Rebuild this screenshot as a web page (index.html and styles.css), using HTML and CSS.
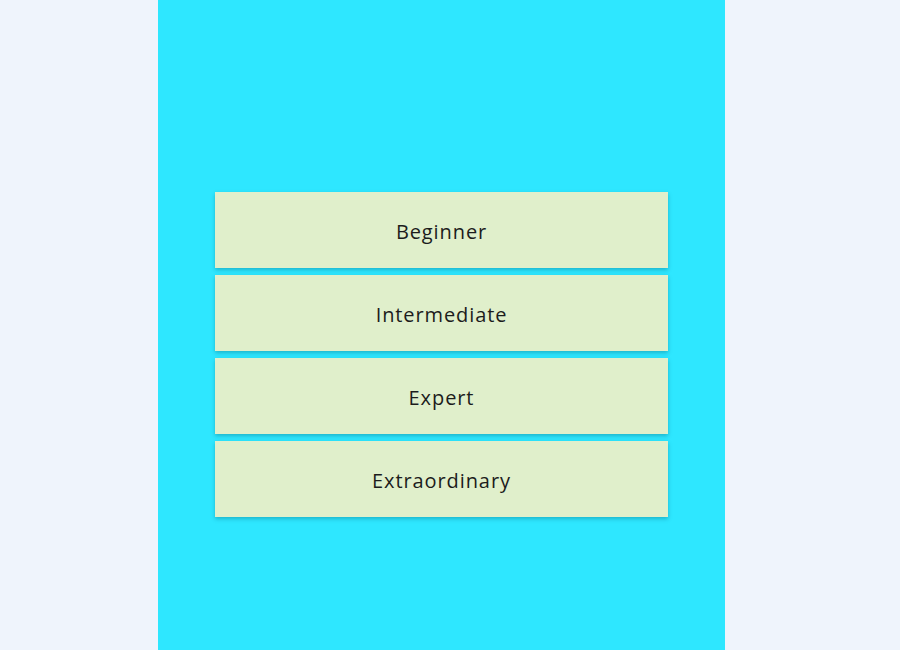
FILE: index.html
```html
<!DOCTYPE html>
<html>
<head>
    <title>Choose Level</title>
    <link rel="stylesheet" href="styles.css">
</head>
<body>
    <div class="app">
        <div class="level-list">
            <button class="level-button">Beginner</button>
            <button class="level-button">Intermediate</button>
            <button class="level-button">Expert</button>
            <button class="level-button">Extraordinary</button>
        </div>
    </div>
</body>
</html>
```

FILE: styles.css
```css
html, body {
    margin: 0;
    height: 100%;
}
body {
    background-color: #eff4fc;
    font-family: 'Open Sans', sans-serif;
    padding-right: 17px;
}
.app {
    width: 567px;
    height: 650px;
    margin: 0 auto;
    padding-top: 192px;
    box-sizing: border-box;
    background-color: #2ee7ff;
    display: flex;
    justify-content: center;
}
.level-list {
    width: 453px;
    display: flex;
    flex-direction: column;
    gap: 7px;
}
.level-button {
    height: 76px;
    padding: 2px 0 0;
    border: none;
    background-color: #e0efcb;
    color: #1c1c1c;
    font-family: 'Open Sans', sans-serif;
    font-size: 20px;
    letter-spacing: 0.9px;
    box-shadow: 0 2px 4px rgba(0, 90, 110, 0.35);
    cursor: pointer;
}
```
